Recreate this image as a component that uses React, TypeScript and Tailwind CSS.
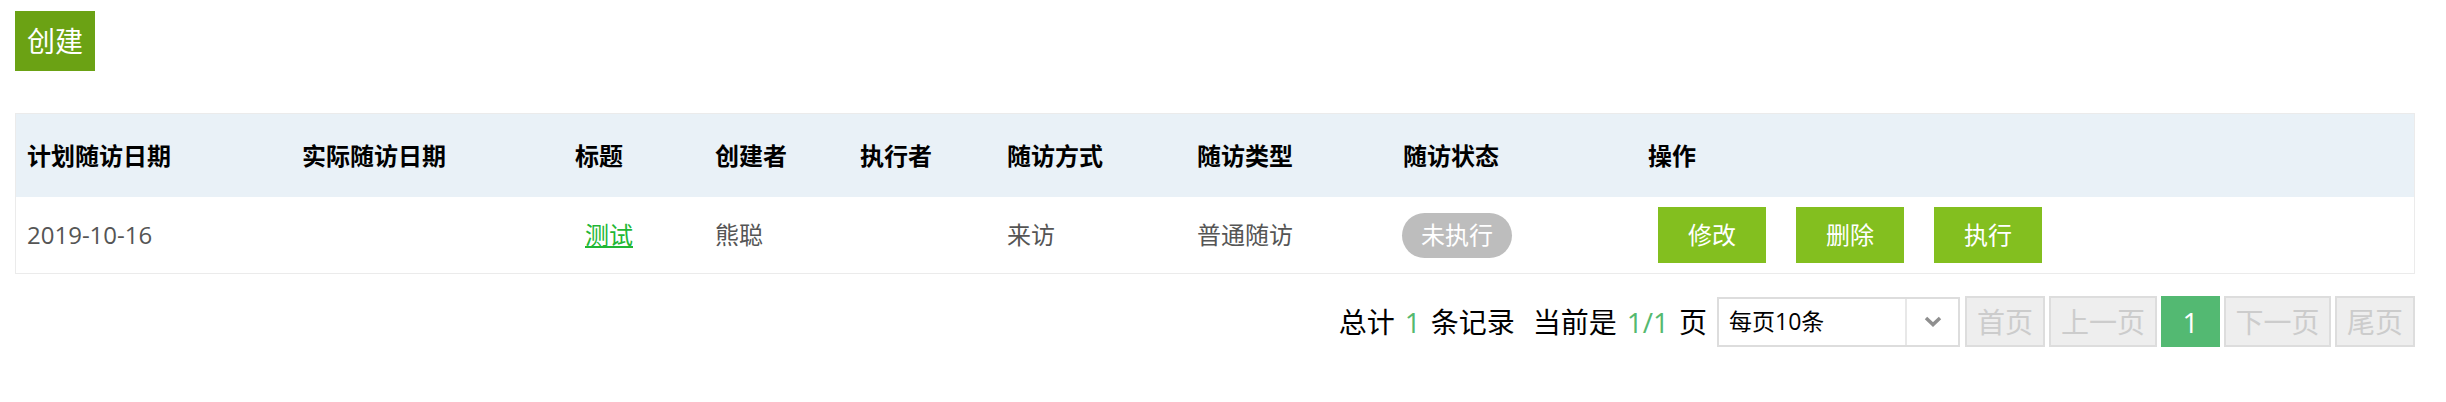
import React from 'react'

type Row = {
  planDate: string
  realDate: string
  title: string
  creator: string
  executor: string
  way: string
  kind: string
  status: string
}

const columns = ['计划随访日期', '实际随访日期', '标题', '创建者', '执行者', '随访方式', '随访类型', '随访状态', '操作']

const rows: Row[] = [
  {
    planDate: '2019-10-16',
    realDate: '',
    title: '测试',
    creator: '熊聪',
    executor: '',
    way: '来访',
    kind: '普通随访',
    status: '未执行',
  },
]

const grid = 'grid grid-cols-[275px_273px_140px_145px_147px_190px_206px_245px_1fr]'

function Pager() {
  return (
    <div className="mt-[22px] flex w-[2400px] items-center justify-end text-[28px] text-black">
      <span>总计</span>
      <span className="mx-[10px] text-[#55b96f]">1</span>
      <span>条记录</span>
      <span className="ml-[18px]">当前是</span>
      <span className="mx-[10px] text-[#55b96f]">1/1</span>
      <span>页</span>
      <div className="ml-[10px] flex h-[50px] w-[243px] items-center border-2 border-[#dddddd] bg-white">
        <span className="flex-1 pl-[10px] text-[23px] text-black">每页10条</span>
        <div className="flex h-full w-[53px] items-center justify-center border-l-2 border-[#e8e8e8]">
          <svg width="18" height="11" viewBox="0 0 18 11" fill="none">
            <polyline points="2,2 9,8.5 16,2" stroke="#8f8f8f" strokeWidth="3.5" />
          </svg>
        </div>
      </div>
      <div className="ml-[5px] flex gap-[4px]">
        <span className="flex h-[51px] w-[80px] items-center justify-center border-2 border-[#dddddd] bg-[#eeeeee] text-[#cccccc]">首页</span>
        <span className="flex h-[51px] w-[108px] items-center justify-center border-2 border-[#dddddd] bg-[#eeeeee] text-[#cccccc]">上一页</span>
        <span className="flex h-[51px] w-[59px] items-center justify-center bg-[#53b972] text-white">1</span>
        <span className="flex h-[51px] w-[107px] items-center justify-center border-2 border-[#dddddd] bg-[#eeeeee] text-[#cccccc]">下一页</span>
        <span className="flex h-[51px] w-[80px] items-center justify-center border-2 border-[#dddddd] bg-[#eeeeee] text-[#cccccc]">尾页</span>
      </div>
    </div>
  )
}

export default function App() {
  return (
    <div className="h-[402px] bg-white pl-[15px] pt-[11px] font-['Open_Sans','Noto_Sans_CJK_SC',sans-serif]">
      <button className="flex h-[60px] w-[80px] items-center justify-center bg-[#6ba214] text-[28px] text-white">
        创建
      </button>

      <div className="mt-[42px] w-[2400px] border border-[#ebebeb]">
        {/* header */}
        <div className={`${grid} h-[83px] items-center bg-[#e9f1f7] text-[24px] font-bold text-black`}>
          {columns.map((c) => (
            <div key={c} className="pl-[11px]">
              {c}
            </div>
          ))}
        </div>

        {/* body */}
        {rows.map((r, i) => (
          <div key={i} className={`${grid} h-[76px] items-center bg-white text-[24px] text-[#555555]`}>
            <div className="pl-[11px]">{r.planDate}</div>
            <div className="pl-[11px]">{r.realDate}</div>
            <div className="pl-[21px]">
              <a className="text-[#22b735] underline">{r.title}</a>
            </div>
            <div className="pl-[11px]">{r.creator}</div>
            <div className="pl-[11px]">{r.executor}</div>
            <div className="pl-[11px]">{r.way}</div>
            <div className="pl-[11px]">{r.kind}</div>
            <div className="pl-[10px]">
              <span className="inline-flex h-[45px] items-center rounded-full bg-[#bdbdbd] px-[19px] text-white">
                {r.status}
              </span>
            </div>
            <div className="flex gap-[30px] pl-[21px]">
              <button className="h-[56px] w-[108px] bg-[#83bf1f] text-white">修改</button>
              <button className="h-[56px] w-[108px] bg-[#83bf1f] text-white">删除</button>
              <button className="h-[56px] w-[108px] bg-[#83bf1f] text-white">执行</button>
            </div>
          </div>
        ))}
      </div>

      <Pager />
    </div>
  )
}
